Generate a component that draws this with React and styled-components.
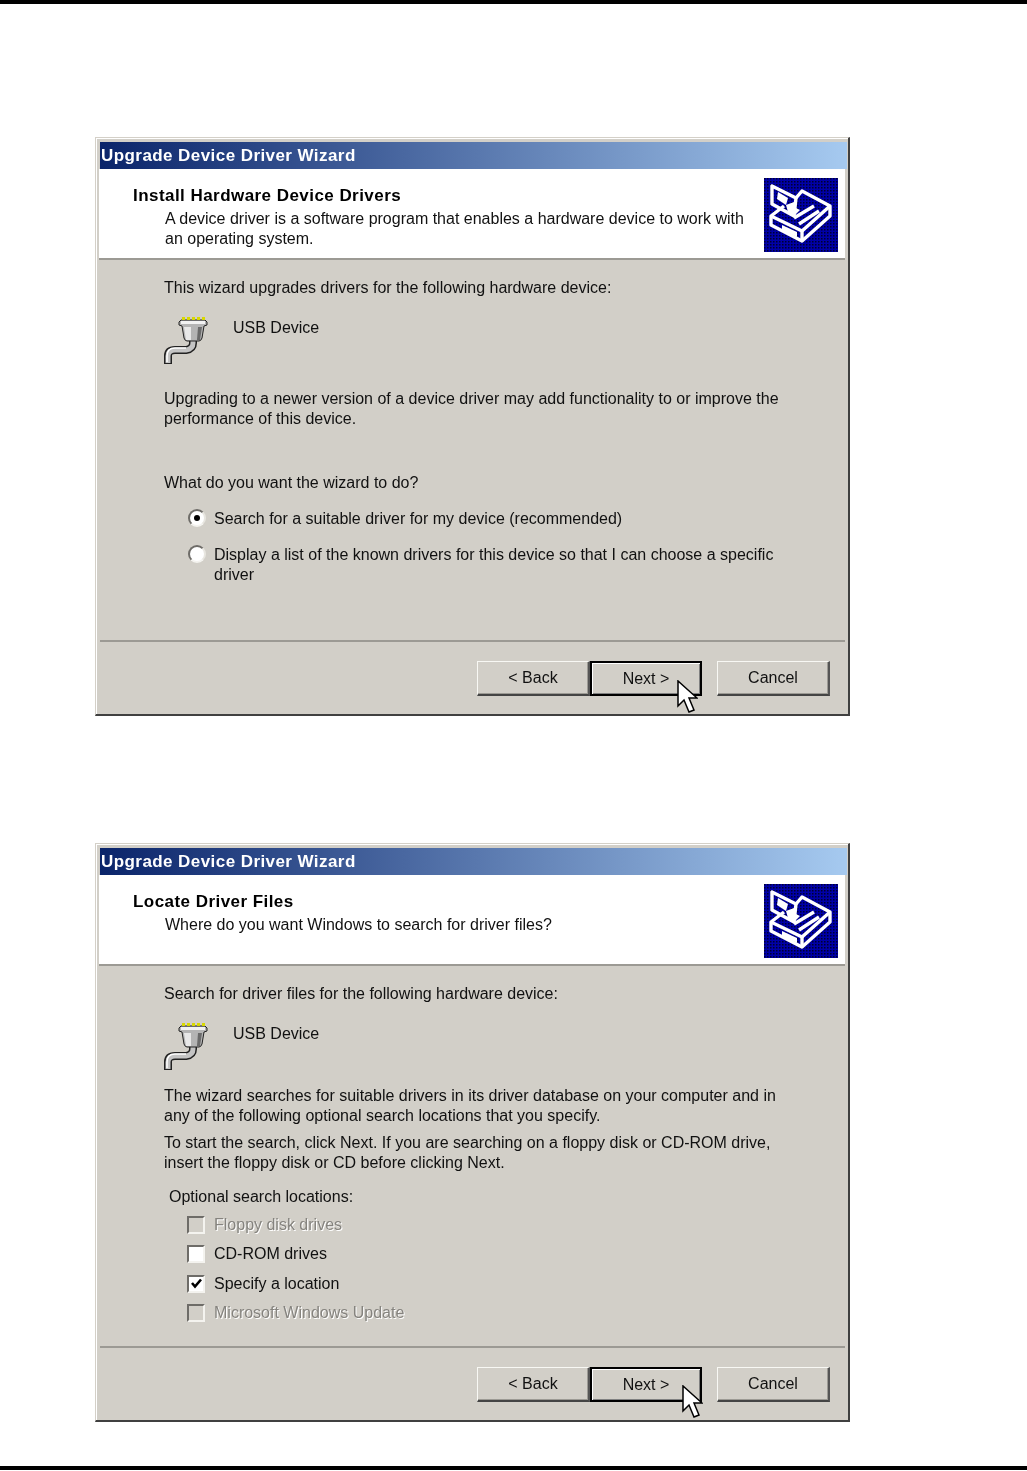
import React from "react"
import styled, { createGlobalStyle } from "styled-components"

const GlobalStyle = createGlobalStyle`
  html, body {
    margin: 0;
    padding: 0;
    background: #fff;
  }
`
const Page = styled.div`
  position: relative;
  width: 1027px;
  height: 1471px;
  overflow: hidden;
  display: flex;
  flex-direction: column;
  font-family: "Liberation Sans", Arial, sans-serif;
  color: #111;
`
const TopRule = styled.div`
  height: 4px;
  background: #000;
  margin-bottom: 133px;
`
const BottomRule = styled.div`
  height: 4px;
  background: #000;
  margin-top: 44px;
`
const Dialog = styled.section`
  position: relative;
  box-sizing: border-box;
  width: 755px;
  height: 579px;
  margin-left: 95px;
  margin-bottom: ${props => props.$gap || 0}px;
  padding: 4px 1px 3px 4px;
  display: flex;
  flex-direction: column;
  background: #d2cfc8;
  border-style: solid;
  border-width: 1px 2px 2px 1px;
  border-color: #d4d0c8 #404040 #404040 #d4d0c8;
  box-shadow: inset 1px 1px 0 #fff;
  filter: blur(0.35px);
`
const TitleBar = styled.div`
  height: 27px;
  flex: none;
  padding-left: 1px;
  background: linear-gradient(90deg, #0a246a, #a6caf0);
  color: #fff;
  font-weight: bold;
  font-size: 17px;
  letter-spacing: 0.43px;
  line-height: 27px;
`
const Header = styled.header`
  position: relative;
  height: 89px;
  flex: none;
  background: #fff;
  border-bottom: 2px solid #9c9a94;
  margin-right: 2px;
  margin-left: -1px;
`
const Heading = styled.h2`
  margin: 0 0 2px;
  padding: 16px 0 0 34px;
  font-size: 17px;
  letter-spacing: 0.45px;
  line-height: 22px;
  font-weight: bold;
  color: #000;
`
const Subtitle = styled.p`
  margin: 0;
  padding-left: 66px;
  font-size: 16px;
  line-height: 20px;
  white-space: nowrap;
`
const Emblem = styled.svg`
  position: absolute;
  top: 9px;
  right: 7px;
  width: 74px;
  height: 74px;
`
const Body = styled.main`
  flex: 1;
  padding-left: 64px;
  font-size: 16px;
  line-height: 20px;
`
const Text = styled.p`
  margin: ${props => props.$top}px 0 0 ${props => props.$left || 0}px;
  white-space: nowrap;
`
const DeviceRow = styled.div`
  display: flex;
  align-items: flex-start;
  margin-top: 20px;
  height: 50px;
`
const PortSvg = styled.svg`
  flex: none;
  margin: -3px 0 0 -2px;
  width: 50px;
  height: 52px;
`
const DeviceName = styled.span`
  margin-left: 21px;
  line-height: 20px;
`
const RadioRow = styled.label`
  display: flex;
  align-items: flex-start;
  margin: ${props => props.$top}px 0 0 24px;
  white-space: nowrap;
`
const RadioDot = styled.span`
  box-sizing: border-box;
  flex: none;
  width: 18px;
  height: 18px;
  margin-right: 8px;
  border-radius: 50%;
  background: #fff;
  border: 2px solid;
  border-color: #6e6c68 #e8e6e0 #f4f3ef #6e6c68;
  display: flex;
  align-items: center;
  justify-content: center;
  &::after {
    content: "";
    width: 6px;
    height: 6px;
    border-radius: 50%;
    background: ${props => (props.$checked ? "#000" : "transparent")};
  }
`
const CheckList = styled.div`
  margin: 8px 0 0 23px;
  display: flex;
  flex-direction: column;
  gap: 9.3px;
`
const CheckRow = styled.label`
  display: flex;
  align-items: center;
  height: 20px;
  color: ${props => (props.$disabled ? "#85837e" : "inherit")};
  text-shadow: ${props => (props.$disabled ? "1px 1px 0 #fff" : "none")};
`
const CheckBox = styled.span`
  box-sizing: border-box;
  flex: none;
  width: 18px;
  height: 18px;
  margin-right: 9px;
  display: flex;
  align-items: center;
  justify-content: center;
  background: ${props => (props.$disabled ? "#d2cfc8" : "#fff")};
  border: 2px solid;
  border-color: #6e6c68 #f4f3ef #f4f3ef #6e6c68;
`
const Footer = styled.footer`
  height: 71px;
  flex: none;
  box-sizing: border-box;
  border-top: 2px solid;
  border-image: linear-gradient(#9c9a94 50%, #fff 50%) 2;
  margin-right: 2px;
  display: flex;
  justify-content: flex-end;
  align-items: flex-start;
  padding: 19px 15px 0 0;
`
const Button = styled.button`
  box-sizing: border-box;
  width: ${props => props.$width || 113}px;
  height: 35px;
  margin-left: ${props => props.$gap || 0}px;
  padding: 0;
  background: #d2cfc8;
  font-family: inherit;
  font-size: 16px;
  color: #111;
  border-style: solid;
  border-width: ${props => (props.$default ? "2px" : "1px 2px 2px 1px")};
  border-color: ${props =>
    props.$default ? "#000" : "#f8f8f4 #555 #444 #f8f8f4"};
  box-shadow: ${props =>
    props.$default ? "inset 1px 1px 0 #fff, inset -1px -1px 0 #808080" : "inset -1px -1px 0 #9c9a94"};
`
const Pointer = styled.svg`
  position: absolute;
  left: ${props => props.$left}px;
  top: ${props => props.$top}px;
  width: 21px;
  height: 33px;
`

const HardwareEmblem = () => (
  <Emblem viewBox="0 0 74 74">
    <defs>
      <pattern id="dots" width="3" height="3" patternUnits="userSpaceOnUse">
        <rect width="3" height="3" fill="#0000a8" />
        <rect width="1.5" height="1.5" fill="#000030" />
      </pattern>
    </defs>
    <rect width="74" height="74" fill="url(#dots)" />
    <g fill="none" stroke="#fff" strokeWidth="3.4" strokeLinejoin="round">
      <path d="M8 8 L8 26 L30 38 L32 20 Z" />
      <path d="M32 20 L38 13 L66 28 L66 38 L38 63 L7 47 L7 38 L20 28" />
      <path d="M7 38 L38 53 L66 28" />
      <path d="M38 53 V63" />
      <path d="M30 40 L50 28 M35 46 L55 33" />
    </g>
    <g fill="#fff">
      <path d="M18 47 L33 54 L33 59 L18 52 Z" />
      <path d="M14 14 L24 20 L22 27 L13 21 Z" />
      <path d="M22 27 L30 24 L32 30 L36 32 L30 38 L24 34 Z" />
    </g>
  </Emblem>
)

const PortIcon = () => (
  <PortSvg viewBox="0 0 50 52">
    <path d="M6 49 V41 Q6 35 13 35 H24 Q31 34 31 28 V24" fill="none" stroke="#222" strokeWidth="8" />
    <path d="M6 48 V41 Q6 35 13 35 H24 Q31 34 31 28 V24" fill="none" stroke="#c4c4c4" strokeWidth="5" />
    <path d="M5 47 V41 Q5 33 13 33 H24" fill="none" stroke="#fff" strokeWidth="1.5" />
    <path d="M19 5 H43 L45 7 V10 L42 11 L40 23 Q39 26 37 26 H25 Q23 26 22 23 L20 11 L17 10 V7 Z" fill="#b4b4b4" stroke="#222" strokeWidth="1" />
    <path d="M19 6 H43 V9 H19 Z" fill="#f2f2f2" />
    <path d="M22 12 H29 V25 H24 Z" fill="#e8e8e8" />
    <path d="M36 12 H40 L38 25 H35 Z" fill="#6a6a6a" />
    <g fill="#d8d800">
      <rect x="20" y="2" width="3" height="3" />
      <rect x="25" y="2" width="3" height="3" />
      <rect x="30" y="2" width="3" height="3" />
      <rect x="35" y="2" width="3" height="3" />
      <rect x="40" y="2" width="3" height="3" />
    </g>
  </PortSvg>
)

const Check = () => (
  <svg width="13" height="13" viewBox="0 0 13 13">
    <path d="M2 6 L5 9.5 L11 2.5" fill="none" stroke="#000" strokeWidth="2.6" />
  </svg>
)

const Buttons = () => (
  <Footer>
    <Button>&lt; Back</Button>
    <Button $default $width={112}>Next &gt;</Button>
    <Button $gap={15}>Cancel</Button>
  </Footer>
)

const Cursor = ({ left, top }) => (
  <Pointer $left={left} $top={top} viewBox="0 0 21 33">
    <path d="M1 1 V26 L7 20 L12 32 L17 30 L12 18 H20 Z" fill="#fff" stroke="#000" strokeWidth="1.5" strokeLinejoin="miter" />
  </Pointer>
)

const Wizard = ({ title, lines, gap, cursor, children }) => (
  <Dialog $gap={gap}>
    <TitleBar>Upgrade Device Driver Wizard</TitleBar>
    <Header>
      <Heading>{title}</Heading>
      {lines.map(line => (
        <Subtitle key={line}>{line}</Subtitle>
      ))}
      <HardwareEmblem />
    </Header>
    <Body>{children}</Body>
    <Buttons />
    <Cursor left={cursor[0]} top={cursor[1]} />
  </Dialog>
)

export default function App() {
  return (
    <Page>
      <GlobalStyle />
      <TopRule />
      <Wizard
        title="Install Hardware Device Drivers"
        lines={[
          "A device driver is a software program that enables a hardware device to work with",
          "an operating system.",
        ]}
        gap={127}
        cursor={[581, 542]}
      >
        <Text $top={18}>This wizard upgrades drivers for the following hardware device:</Text>
        <DeviceRow>
          <PortIcon />
          <DeviceName>USB Device</DeviceName>
        </DeviceRow>
        <Text $top={21}>
          Upgrading to a newer version of a device driver may add functionality to or improve the
          <br />
          performance of this device.
        </Text>
        <Text $top={44}>What do you want the wizard to do?</Text>
        <RadioRow $top={16}>
          <RadioDot $checked />
          <span>Search for a suitable driver for my device (recommended)</span>
        </RadioRow>
        <RadioRow $top={16}>
          <RadioDot />
          <span>
            Display a list of the known drivers for this device so that I can choose a specific
            <br />
            driver
          </span>
        </RadioRow>
      </Wizard>
      <Wizard
        title="Locate Driver Files"
        lines={["Where do you want Windows to search for driver files?"]}
        cursor={[586, 541]}
      >
        <Text $top={18}>Search for driver files for the following hardware device:</Text>
        <DeviceRow>
          <PortIcon />
          <DeviceName>USB Device</DeviceName>
        </DeviceRow>
        <Text $top={12}>
          The wizard searches for suitable drivers in its driver database on your computer and in
          <br />
          any of the following optional search locations that you specify.
        </Text>
        <Text $top={7}>
          To start the search, click Next. If you are searching on a floppy disk or CD-ROM drive,
          <br />
          insert the floppy disk or CD before clicking Next.
        </Text>
        <Text $top={14} $left={5}>Optional search locations:</Text>
        <CheckList>
          <CheckRow $disabled>
            <CheckBox $disabled />
            Floppy disk drives
          </CheckRow>
          <CheckRow>
            <CheckBox />
            CD-ROM drives
          </CheckRow>
          <CheckRow>
            <CheckBox>
              <Check />
            </CheckBox>
            Specify a location
          </CheckRow>
          <CheckRow $disabled>
            <CheckBox $disabled />
            Microsoft Windows Update
          </CheckRow>
        </CheckList>
      </Wizard>
      <BottomRule />
    </Page>
  )
}
